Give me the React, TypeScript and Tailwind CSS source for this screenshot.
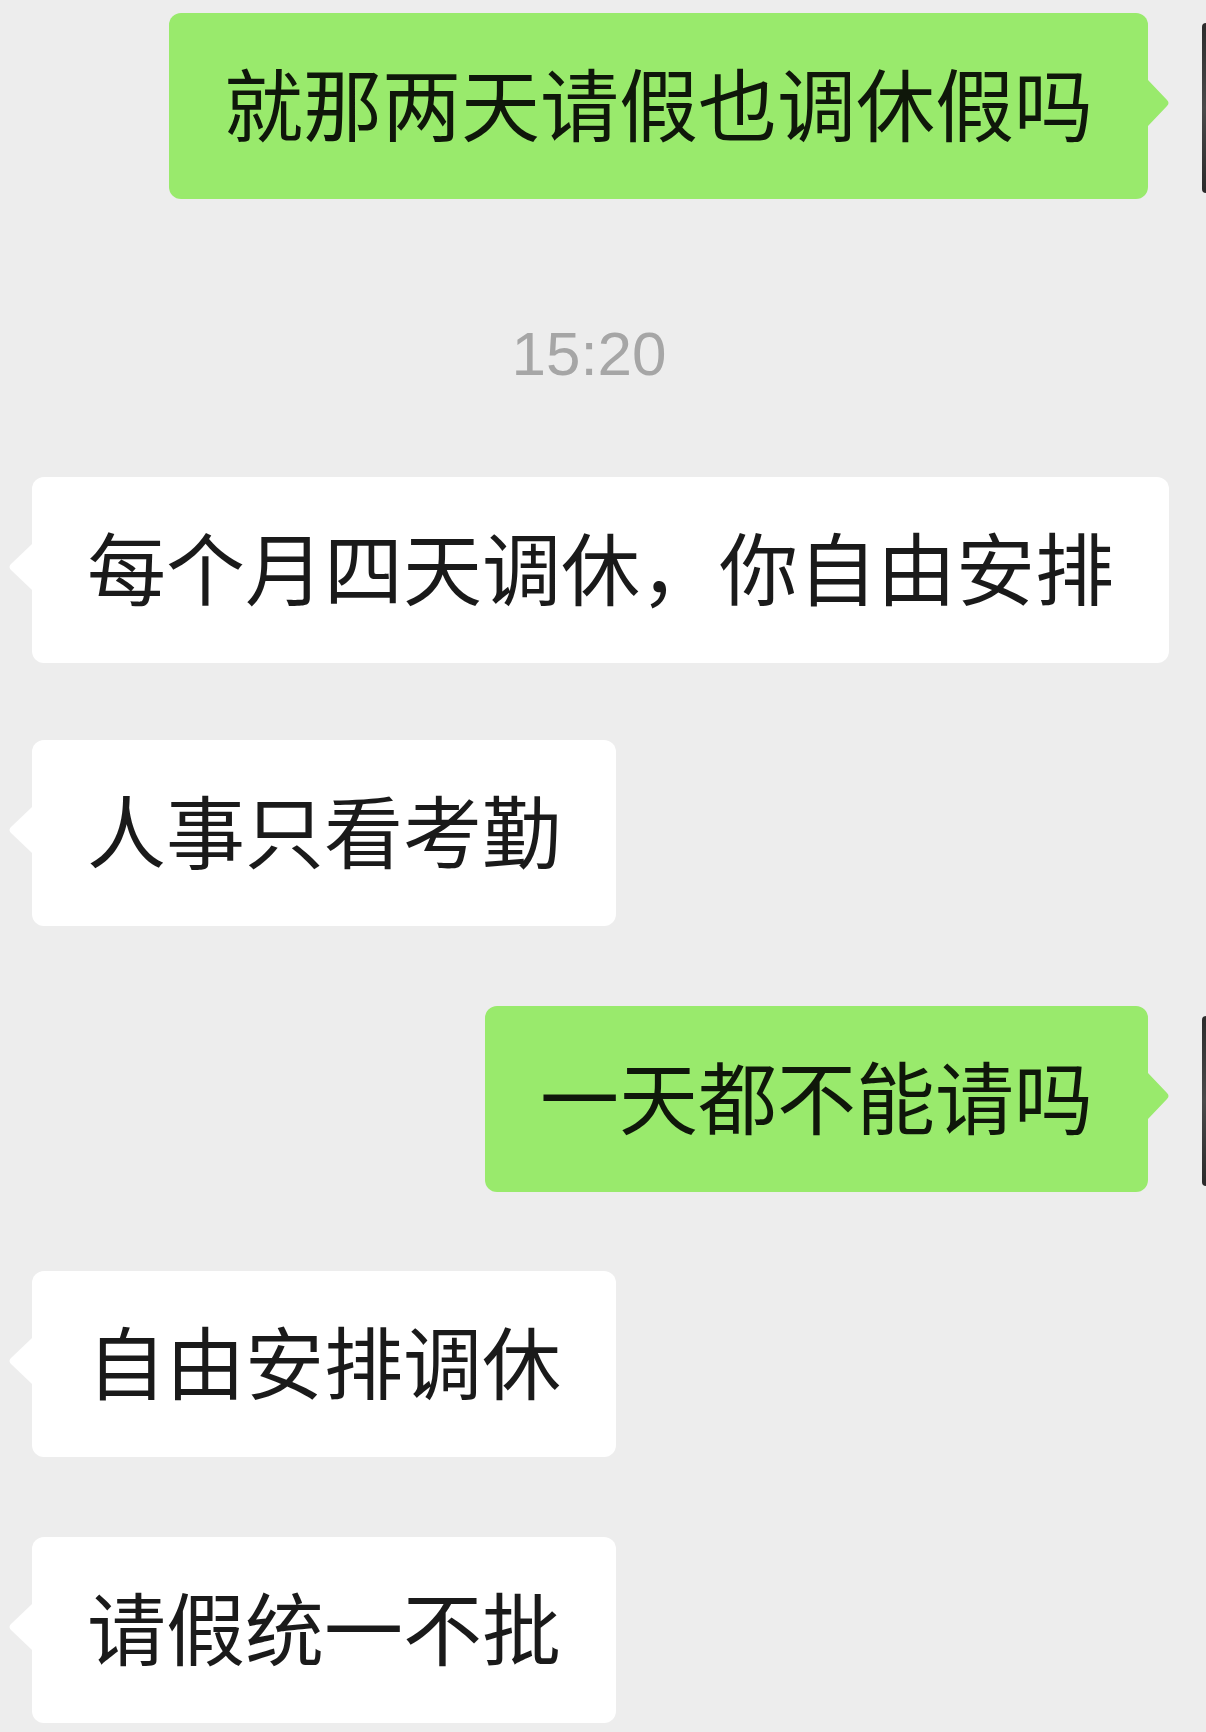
import React from 'react'

type Msg = { kind: 'me' | 'them' | 'time'; text: string; mt: string }

const messages: Msg[] = [
  { kind: 'me', text: '就那两天请假也调休假吗', mt: 'mt-[13px]' },
  { kind: 'time', text: '15:20', mt: 'mt-[119px]' },
  { kind: 'them', text: '每个月四天调休，你自由安排', mt: 'mt-[87px]' },
  { kind: 'them', text: '人事只看考勤', mt: 'mt-[77px]' },
  { kind: 'me', text: '一天都不能请吗', mt: 'mt-[80px]' },
  { kind: 'them', text: '自由安排调休', mt: 'mt-[79px]' },
  { kind: 'them', text: '请假统一不批', mt: 'mt-[80px]' },
]

function TailRight() {
  return (
    <svg className="absolute right-[-22px] top-[67px]" width="22" height="46" viewBox="0 0 22 46">
      <path d="M0 0 L19 20 Q22 23 19 26 L0 46 Z" fill="#99ea6c" />
    </svg>
  )
}

function TailLeft() {
  return (
    <svg className="absolute left-[-24px] top-[67px]" width="24" height="46" viewBox="0 0 24 46">
      <path d="M24 0 L3 20 Q0 23 3 26 L24 46 Z" fill="#ffffff" />
    </svg>
  )
}

function MyBubble({ text, mt }: { text: string; mt: string }) {
  return (
    <div className={`flex justify-end items-start ${mt}`}>
      <div className="relative mr-[54px] rounded-[12px] bg-[#99ea6c] px-[55px] pt-[42px] pb-[50px] font-['Noto_Sans_CJK_SC',sans-serif] text-[79px] leading-[94px] text-[#0f170a] whitespace-nowrap">
        {text}
        <TailRight />
      </div>
      {/* avatar, cut off by the screen edge */}
      <div className="mt-[10px] h-[170px] w-[4px] shrink-0 rounded-l-[6px] bg-gradient-to-b from-[#2c2c2c] via-[#4a4a4a] to-[#2a2a2a]" />
    </div>
  )
}

function TheirBubble({ text, mt }: { text: string; mt: string }) {
  return (
    <div className={`flex justify-start ${mt}`}>
      <div className="relative ml-[32px] rounded-[12px] bg-white px-[55px] pt-[42px] pb-[50px] font-['Noto_Sans_CJK_SC',sans-serif] text-[79px] leading-[94px] text-[#1a1a1a] whitespace-nowrap">
        {text}
        <TailLeft />
      </div>
    </div>
  )
}

export default function App() {
  return (
    <div className="flex h-[1732px] w-[1206px] flex-col overflow-hidden bg-[#ededed]">
      {messages.map((m, i) => {
        if (m.kind === 'time') {
          return (
            <div
              key={i}
              className={`w-full pr-[28px] text-center font-['Liberation_Sans',Arial,sans-serif] text-[62px] leading-[72px] text-[#a6a6a6] ${m.mt}`}
            >
              {m.text}
            </div>
          )
        }
        if (m.kind === 'me') return <MyBubble key={i} text={m.text} mt={m.mt} />
        return <TheirBubble key={i} text={m.text} mt={m.mt} />
      })}
    </div>
  )
}
